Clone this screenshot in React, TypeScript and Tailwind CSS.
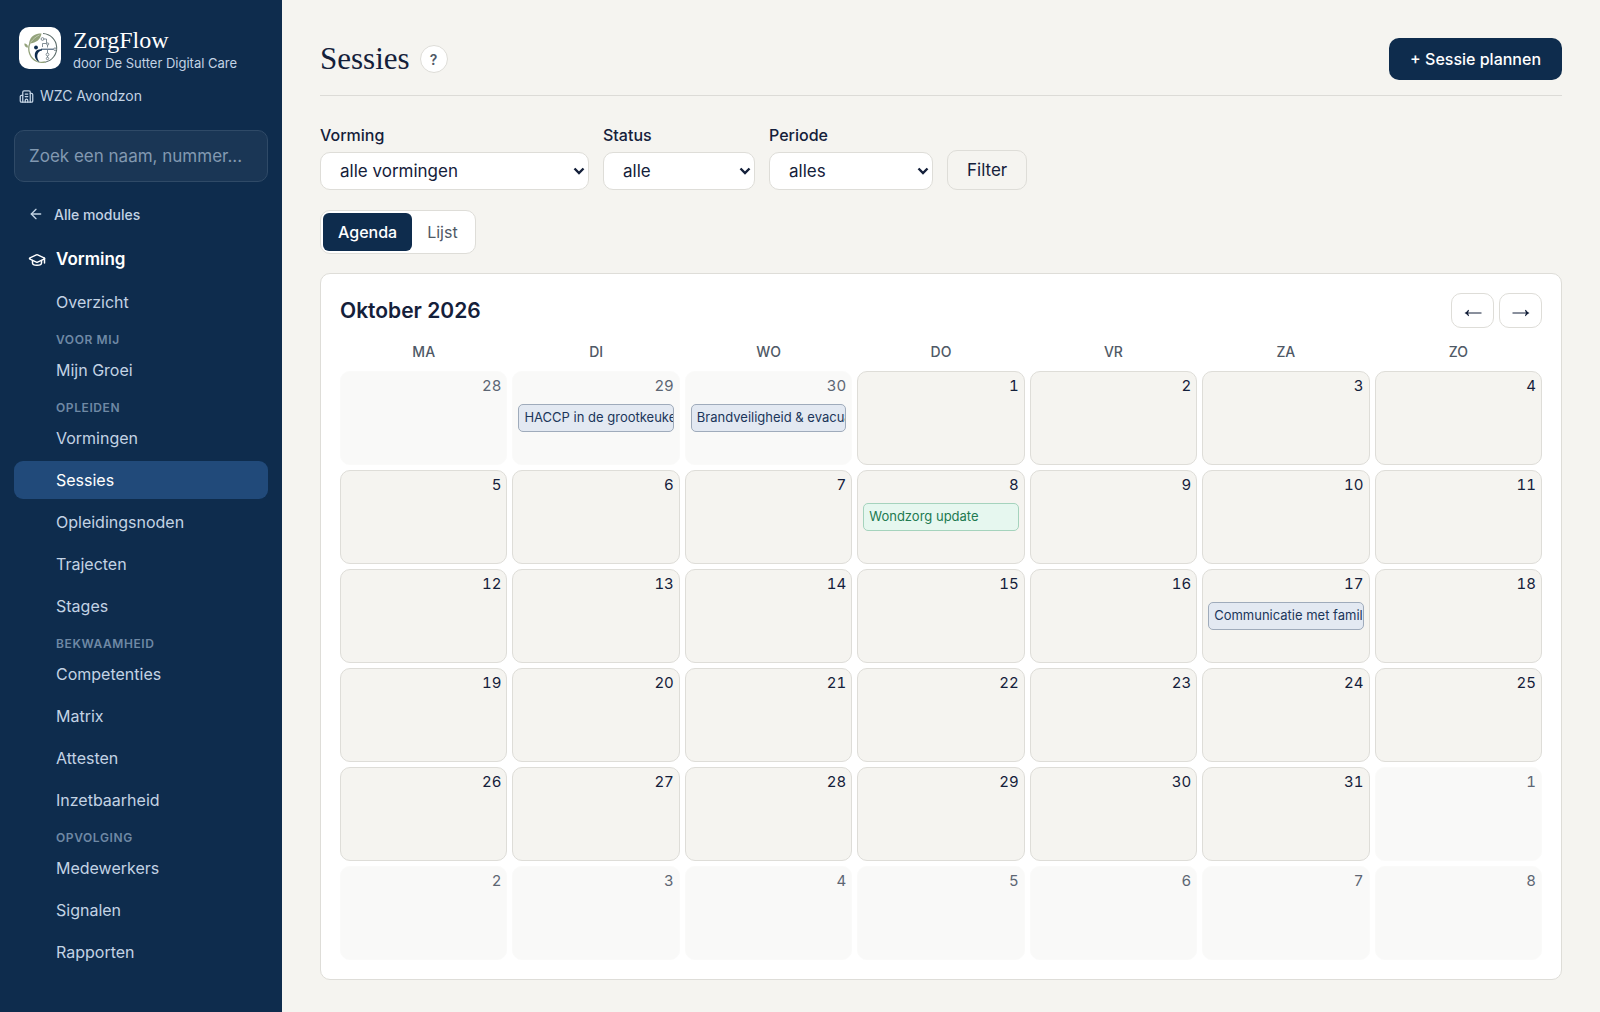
import { ArrowLeft, GraduationCap } from "lucide-react";

type NavGroup = { heading?: string; items: string[] };

const navGroups: NavGroup[] = [
  { items: ["Overzicht"] },
  { heading: "Voor mij", items: ["Mijn Groei"] },
  { heading: "Opleiden", items: ["Vormingen", "Sessies", "Opleidingsnoden", "Trajecten", "Stages"] },
  { heading: "Bekwaamheid", items: ["Competenties", "Matrix", "Attesten", "Inzetbaarheid"] },
  { heading: "Opvolging", items: ["Medewerkers", "Signalen", "Rapporten"] },
];

const weekdays = ["MA", "DI", "WO", "DO", "VR", "ZA", "ZO"];

type Session = { title: string; tone: "blue" | "green" };
type Day = { key: string; day: number; outside: boolean; session?: Session };

const sessions: Record<string, Session> = {
  "2026-9-29": { title: "HACCP in de grootkeuken", tone: "blue" },
  "2026-9-30": { title: "Brandveiligheid & evacuatie", tone: "blue" },
  "2026-10-8": { title: "Wondzorg update", tone: "green" },
  "2026-10-17": { title: "Communicatie met familie", tone: "blue" },
};

const days: Day[] = Array.from({ length: 42 }, (_, i) => {
  const date = new Date(2026, 8, 28 + i);
  const key = `${date.getFullYear()}-${date.getMonth() + 1}-${date.getDate()}`;
  return { key, day: date.getDate(), outside: date.getMonth() !== 9, session: sessions[key] };
});

const weeks = Array.from({ length: 6 }, (_, w) => days.slice(w * 7, w * 7 + 7));

function Logo() {
  return (
    <svg viewBox="0 0 42 42" className="size-[42px] shrink-0 rounded-[10px] bg-white" fill="none" aria-hidden="true">
      <path d="M11 16a14 14 0 0 0 7 18.500a14 14 0 0 0 8 .5" stroke="#93a27b" strokeWidth="1.300" />
      <path d="M24 6.500a14.500 14.500 0 0 1 2 28.700" stroke="#5f6f6c" strokeWidth="1.100" />
      <path d="M10 16.500C11 9 16 6.500 22.500 6.500C21.500 12 18 16 10 16.500z" fill="#93a27b" />
      <path d="M11.500 15.500C14 12 17 9.500 20.500 8" stroke="#dbe2cf" strokeWidth="0.600" />
      <path d="M9 20.500C6 20.500 5.500 18.500 5.300 16.500C7.800 16.700 9 18 9 20.500z" fill="#93a27b" />
      <circle cx="17" cy="20.500" r="1.900" fill="#0e2c4d" />
      <path d="M23 22.300C17 21.500 14.500 26 16.500 31.500C17.500 33.500 19 34.500 20.500 35C17 30.500 17.500 24.500 23 23.500z" fill="#0e2c4d" />
      <path d="M22 22.200h13" stroke="#0e2c4d" strokeWidth="0.900" />
      <path d="M24.500 12h3v4.500h-4v3.500M28.500 17.500v3M28.500 23v3.500M28.500 29v2" stroke="#66757d" strokeWidth="0.800" />
      <g stroke="#66757d" strokeWidth="0.800" fill="#fff">
        <circle cx="23.500" cy="12" r="1.400" />
        <circle cx="28.700" cy="17" r="1.100" />
        <circle cx="36" cy="22.200" r="1.300" />
        <circle cx="28.500" cy="27.500" r="1.400" />
        <circle cx="28.500" cy="31.500" r="1.200" />
      </g>
    </svg>
  );
}

function FacilityIcon() {
  return (
    <svg viewBox="0 0 24 24" className="size-[15px] shrink-0" fill="none" stroke="currentColor" strokeWidth="2" strokeLinecap="round" strokeLinejoin="round" aria-hidden="true">
      <path d="M10 12h4M10 8h4M14 21v-3a2 2 0 0 0-4 0v3" />
      <path d="M6 10H4a2 2 0 0 0-2 2v7a2 2 0 0 0 2 2h16a2 2 0 0 0 2-2V9a2 2 0 0 0-2-2h-2" />
      <path d="M6 21V5a2 2 0 0 1 2-2h8a2 2 0 0 1 2 2v16" />
    </svg>
  );
}

function Sidebar() {
  return (
    <aside className="flex w-[282px] shrink-0 flex-col bg-[#0e2c4d] px-3.5 pt-[27px] text-[#c3d3e4]">
      <div className="flex items-start gap-3 px-[5px]">
        <Logo />
        <div>
          <div className="font-['Liberation_Serif',serif] text-[24px] leading-[26px] text-white">ZorgFlow</div>
          <div className="text-[13px] leading-[20px]">door De Sutter Digital Care</div>
        </div>
      </div>
      <div className="mt-3 flex items-center gap-1.5 px-[5px] text-[14px] leading-[22px]">
        <FacilityIcon />
        WZC Avondzon
      </div>
      <input
        type="text"
        aria-label="Zoeken"
        placeholder="Zoek een naam, nummer..."
        className="mt-[23px] h-[52px] w-full rounded-[10px] border border-[#2f4a67] bg-[#1a3655] px-3.5 text-[17px] text-white placeholder:text-[#8299b1]"
      />
      <a href="#modules" className="mt-5 flex h-6 items-center gap-2.5 px-3.5 text-[14px] font-medium">
        <ArrowLeft className="size-4" strokeWidth={2} />
        Alle modules
      </a>
      <a href="#vorming" className="mt-[15px] flex h-[38px] items-center gap-2.5 px-3.5 text-[17px] font-semibold text-white">
        <GraduationCap className="size-[18px]" strokeWidth={2} />
        Vorming
      </a>
      <nav aria-label="Vorming" className="mt-1 flex flex-col">
        {navGroups.map((group) => (
          <div key={group.items[0]} className="flex flex-col">
            {group.heading && (
              <h2 className="h-[26px] pl-[42px] pt-1.5 text-[12px] leading-[18px] font-semibold tracking-wider text-[#6f89a5] uppercase">
                {group.heading}
              </h2>
            )}
            {group.items.map((item) => (
              <a
                key={item}
                href={`#${item}`}
                aria-current={item === "Sessies" ? "page" : undefined}
                className="mb-1 flex h-[38px] items-center rounded-[9px] pl-[42px] text-[16px] aria-[current=page]:bg-[#214a7a] aria-[current=page]:text-white"
              >
                {item}
              </a>
            ))}
          </div>
        ))}
      </nav>
    </aside>
  );
}

function FilterSelect({ id, label, value, width }: { id: string; label: string; value: string; width: string }) {
  return (
    <div className="flex flex-col gap-1">
      <label htmlFor={id} className="text-[16px] leading-[26px] font-medium">
        {label}
      </label>
      <div className={`relative ${width}`}>
        <select id={id} className="block h-[38px] w-full appearance-none rounded-[10px] border border-[#deddd8] bg-white pt-0.5 pr-8 pl-[19px] text-[17px]">
          <option>{value}</option>
        </select>
        <svg viewBox="0 0 12 8" className="pointer-events-none absolute top-[15px] right-1 h-2 w-3" fill="none" aria-hidden="true">
          <path d="M1.500 1.500L6 6l4.500-4.500" stroke="currentColor" strokeWidth="2.400" />
        </svg>
      </div>
    </div>
  );
}

function DayCell({ day, outside, session }: Omit<Day, "key">) {
  return (
    <td
      className={`h-[94px] min-w-0 rounded-[10px] border p-[5px] align-top ${
        outside ? "border-[#fafaf9] bg-[#f9f9f8] text-[#5d6673]" : "border-[#deddd8] bg-[#f5f4f0]"
      }`}
    >
      <div className="text-right text-[15px] leading-[18px] tabular-nums">{day}</div>
      {session && (
        <a
          href="#sessie"
          className={`mt-[9px] block h-7 overflow-hidden rounded-[5px] border px-[5px] text-[13px] leading-[25px] whitespace-nowrap ${
            session.tone === "green"
              ? "border-[#a5d3bd] bg-[#e6f7ef] text-[#217a50]"
              : "border-[#9fabbb] bg-[#e3e9f2] text-[#1b365a]"
          }`}
        >
          {session.title}
        </a>
      )}
    </td>
  );
}

function Calendar() {
  const arrow =
    "flex h-[35px] w-[43px] items-center justify-center rounded-[10px] border border-[#deddd8] bg-white pt-1";
  return (
    <section aria-label="Agenda" className="mt-[19px] rounded-[10px] border border-[#deddd8] bg-white p-[19px]">
      <div className="flex items-center justify-between">
        <h2 className="text-[21px] leading-[34px] font-semibold">Oktober 2026</h2>
        <div className="flex gap-[5px]">
          <button type="button" aria-label="Vorige maand" className={arrow}>
            <svg viewBox="0 0 18 10" className="h-2.5 w-[18px]" aria-hidden="true">
              <path d="M3 5h14.500" stroke="currentColor" strokeWidth="1" />
              <path d="M0.500 5C2.500 4 3.500 3 4.200 1.800L5 2.200L4 5l1 2.800L4.200 8.200C3.500 7 2.500 6 0.500 5z" fill="currentColor" />
            </svg>
          </button>
          <button type="button" aria-label="Volgende maand" className={arrow}>
            <svg viewBox="0 0 18 10" className="h-2.5 w-[18px]" aria-hidden="true">
              <path d="M0.500 5H15" stroke="currentColor" strokeWidth="1" />
              <path d="M17.500 5C15.500 4 14.500 3 13.800 1.800L13 2.200L14 5l-1 2.800L13.800 8.200C14.500 7 15.500 6 17.500 5z" fill="currentColor" />
            </svg>
          </button>
        </div>
      </div>
      <table className="mt-[13px] block">
        <thead className="block">
          <tr className="grid grid-cols-7 gap-[5px]">
            {weekdays.map((d) => (
              <th key={d} scope="col" className="h-[30px] text-[14px] leading-[22px] font-medium text-[#4f5966]">
                {d}
              </th>
            ))}
          </tr>
        </thead>
        <tbody className="flex flex-col gap-[5px]">
          {weeks.map((week) => (
            <tr key={week[0].key} className="grid grid-cols-7 gap-[5px]">
              {week.map(({ key, ...day }) => (
                <DayCell key={key} {...day} />
              ))}
            </tr>
          ))}
        </tbody>
      </table>
    </section>
  );
}

export default function App() {
  return (
    <div className="flex min-h-screen bg-[#f5f4f0] font-['Inter',sans-serif] text-[#14203a]">
      <Sidebar />
      <main className="min-w-0 flex-1 px-[38px] pt-[38px] pb-8">
        <header className="flex items-center justify-between border-b border-[#dcdbd7] pb-[15px]">
          <div className="flex items-center gap-2.5">
            <h1 className="font-['Liberation_Serif',serif] text-[31px] leading-[38px]">Sessies</h1>
            <button
              type="button"
              aria-label="Uitleg"
              className="flex size-7 items-center justify-center rounded-full border border-[#deddd8] bg-white text-[14px] font-semibold text-[#4f5966]"
            >
              ?
            </button>
          </div>
          <button type="button" className="h-[42px] rounded-[10px] bg-[#0e2c4d] px-[21px] text-[16px] font-medium text-white">
            + Sessie plannen
          </button>
        </header>

        <form className="mt-[26px] flex flex-wrap items-end gap-3.5">
          <FilterSelect id="vorming" label="Vorming" value="alle vormingen" width="w-[269px]" />
          <FilterSelect id="status" label="Status" value="alle" width="w-[152px]" />
          <FilterSelect id="periode" label="Periode" value="alles" width="w-[164px]" />
          <button type="button" className="h-10 rounded-[10px] border border-[#deddd8] px-[19px] pt-0.5 text-[17px]">
            Filter
          </button>
        </form>

        <div className="mt-5 flex w-fit rounded-[10px] border border-[#deddd8] bg-white p-0.5">
          <button type="button" aria-pressed="true" className="h-[38px] rounded-[6px] bg-[#0e2c4d] px-[15px] text-[16px] font-medium text-white">
            Agenda
          </button>
          <button type="button" aria-pressed="false" className="h-[38px] rounded-[6px] px-[15px] text-[16px] text-[#4f5966]">
            Lijst
          </button>
        </div>

        <Calendar />
      </main>
    </div>
  );
}
